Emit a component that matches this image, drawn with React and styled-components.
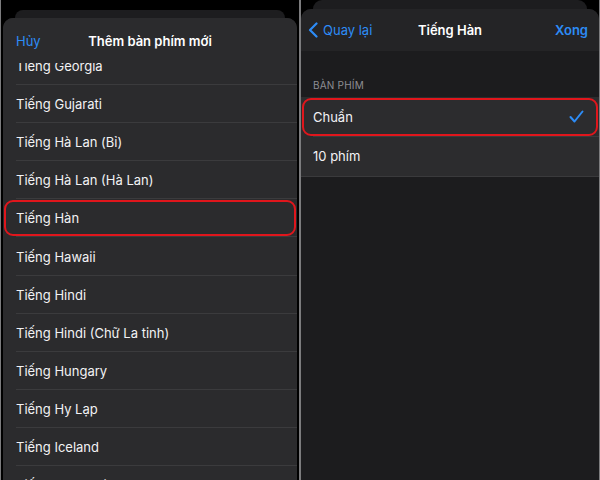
import styled, { createGlobalStyle } from 'styled-components'

const GlobalStyle = createGlobalStyle`
    html, body {
        margin: 0;
        padding: 0;
        background: #000;
    }
    body {
        font-family: Inter, "Noto Sans", "Liberation Sans", sans-serif;
        -webkit-font-smoothing: antialiased;
    }
`

const BLUE = '#2d8cf6'
const RED = '#e0161c'

const Page = styled.div`
    width: 600px;
    height: 480px;
    display: flex;
    gap: 2px;
    padding: 0 1px;
    box-sizing: border-box;
    background: #7c7c7e;
    overflow: hidden;
`
const Panel = styled.div`
    width: ${props => props.width}px;
    height: 480px;
    background: #000;
    display: flex;
    flex-direction: column;
    padding: ${props => props.inset};
    box-sizing: border-box;
    overflow: hidden;
`
const StackEdge = styled.div`
    height: ${props => props.height}px;
    margin: ${props => props.top}px ${props => props.side}px 0;
    background: #1d1d1f;
    border-radius: 10px 10px 0 0;
    flex-shrink: 0;
`
const Sheet = styled.div`
    flex: 1;
    display: flex;
    flex-direction: column;
    background: ${props => props.bg};
    border-radius: 10px 10px 0 0;
    overflow: hidden;
`
const Header = styled.div`
    height: ${props => props.height}px;
    flex-shrink: 0;
    position: relative;
    display: flex;
    align-items: center;
    justify-content: space-between;
    padding: 0 ${props => props.pad}px 0 ${props => props.padLeft}px;
    background: ${props => props.bg};
    z-index: 1;
`
const HeaderTitle = styled.div`
    position: absolute;
    left: 0;
    right: 0;
    text-align: center;
    color: #fff;
    font-size: 13px;
    font-weight: 600;
    pointer-events: none;
`
const NavButton = styled.button`
    background: none;
    border: none;
    padding: 0;
    display: flex;
    align-items: center;
    gap: 5px;
    color: ${BLUE};
    font-family: inherit;
    font-size: 13px;
    font-weight: ${props => props.bold ? 600 : 400};
    cursor: pointer;
`
const ListClip = styled.div`
    flex: 1;
    overflow: hidden;
`
const List = styled.div`
    margin-top: ${props => props.offset || 0}px;
    background: ${props => props.bg || 'transparent'};
`
const Row = styled.div`
    height: ${props => props.height}px;
    display: flex;
    align-items: center;
    justify-content: space-between;
    padding: 0 ${props => props.pad}px 0 ${props => props.indent}px;
    position: relative;
    color: #f2f2f4;
    font-size: 13px;
    border-radius: ${props => props.marked ? '10px' : '0'};
    outline: ${props => props.marked ? `2.5px solid ${RED}` : 'none'};
    outline-offset: -3px;

    &::after {
        content: '';
        position: absolute;
        left: ${props => props.indent}px;
        right: 0;
        bottom: 0;
        height: 1px;
        background: ${props => props.last ? 'transparent' : '#3b3b3d'};
    }
`
const SectionLabel = styled.div`
    padding: 28px 12px 6px;
    line-height: 12px;
    color: #8e8e93;
    font-size: 10px;
    letter-spacing: 0.2px;
`
const SectionEnd = styled.div`
    height: 1px;
    background: #3a3a3c;
`

const languages = [
    'Tiếng Georgia',
    'Tiếng Gujarati',
    'Tiếng Hà Lan (Bỉ)',
    'Tiếng Hà Lan (Hà Lan)',
    'Tiếng Hàn',
    'Tiếng Hawaii',
    'Tiếng Hindi',
    'Tiếng Hindi (Chữ La tinh)',
    'Tiếng Hungary',
    'Tiếng Hy Lạp',
    'Tiếng Iceland',
    'Tiếng Indonesia',
]

const Chevron = () => (
    <svg width="10" height="16" viewBox="0 0 10 16" fill="none">
        <path d="M8.5 1.5 L2 8 L8.5 14.5" stroke={BLUE} strokeWidth="2.2" strokeLinecap="round" strokeLinejoin="round" />
    </svg>
)

const Check = () => (
    <svg width="15" height="13" viewBox="0 0 15 13" fill="none">
        <path d="M1.5 7 L5.5 11.5 L13.5 1.5" stroke={BLUE} strokeWidth="2" strokeLinecap="round" strokeLinejoin="round" />
    </svg>
)

const App = () => {
    return (
        <Page>
            <GlobalStyle />
            <Panel width={298} inset="0 2px">
                <StackEdge top={10} side={12} height={8} />
                <Sheet bg="#2b2b2d">
                    <Header height={45} padLeft={13} pad={13} bg="#2b2b2d">
                        <NavButton>Hủy</NavButton>
                        <HeaderTitle>Thêm bàn phím mới</HeaderTitle>
                    </Header>
                    <ListClip>
                        <List offset={-16}>
                            {languages.map((name) => (
                                <Row key={name} height={38.1} indent={13} pad={13} marked={name === 'Tiếng Hàn'}>
                                    {name}
                                </Row>
                            ))}
                        </List>
                    </ListClip>
                </Sheet>
            </Panel>
            <Panel width={298} inset="0">
                <StackEdge top={0} side={12} height={9} />
                <Sheet bg="#1c1c1e">
                    <Header height={42} padLeft={7} pad={11} bg="#242426">
                        <NavButton><Chevron />Quay lại</NavButton>
                        <HeaderTitle>Tiếng Hàn</HeaderTitle>
                        <NavButton bold>Xong</NavButton>
                    </Header>
                    <SectionLabel>BÀN PHÍM</SectionLabel>
                    <List bg="#2c2c2e">
                        <Row height={39.5} indent={12} pad={15} marked>
                            Chuẩn
                            <Check />
                        </Row>
                        <Row height={39} indent={12} pad={15} last>
                            10 phím
                        </Row>
                    </List>
                    <SectionEnd />
                </Sheet>
            </Panel>
        </Page>
    )
}

export default App
